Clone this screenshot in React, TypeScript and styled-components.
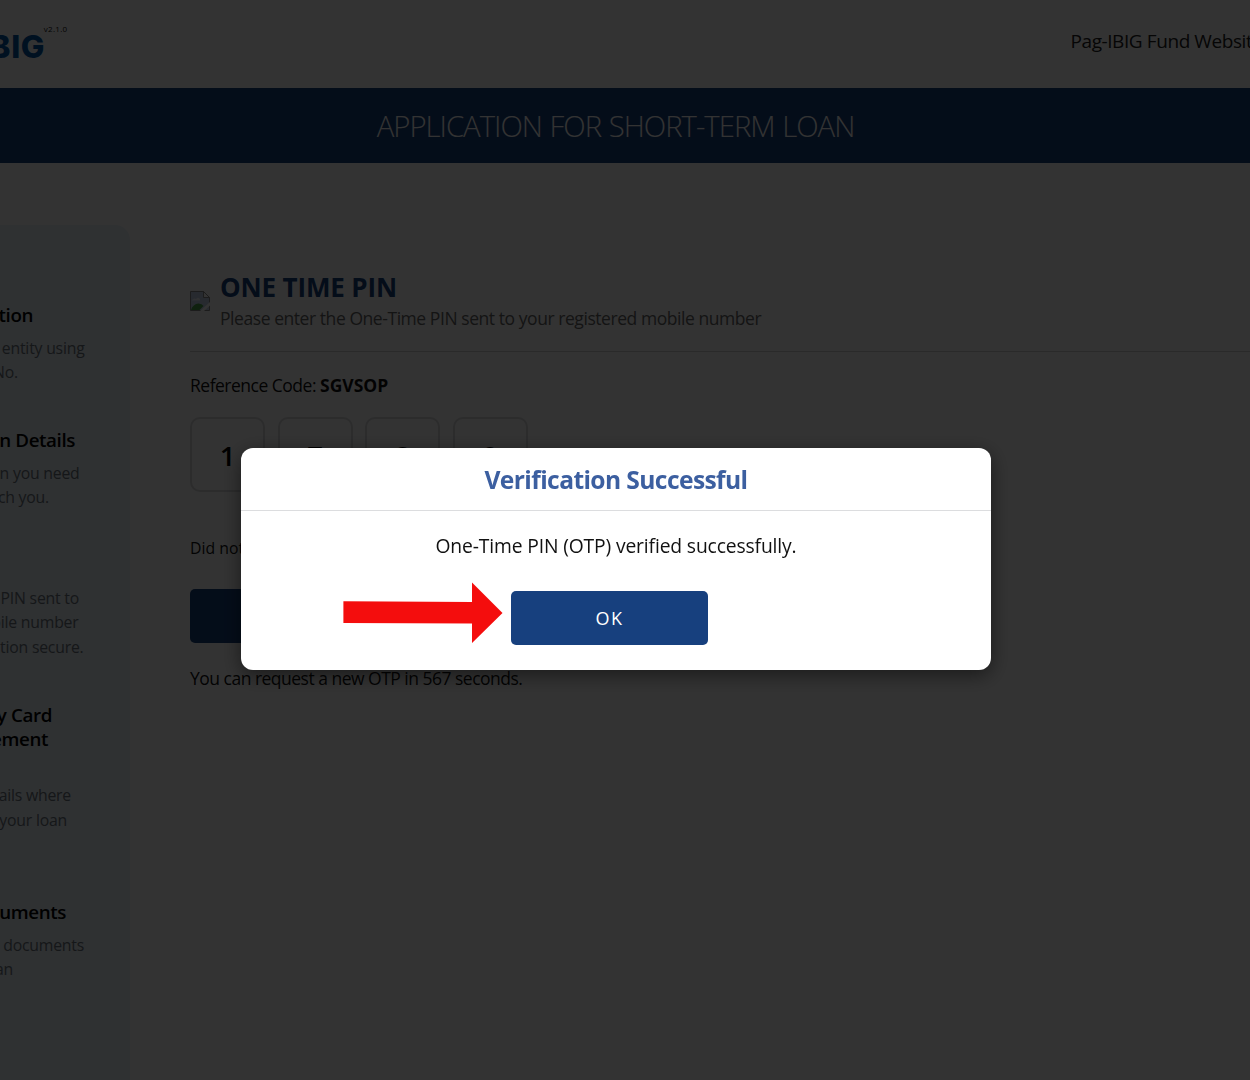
import React from "react";
import styled, { createGlobalStyle } from "styled-components";

const GlobalStyle = createGlobalStyle`
  * { box-sizing: border-box; }
  html, body { margin: 0; height: 1080px; overflow: hidden; background: #fff; }
  body { font-family: "Open Sans", "Noto Sans", sans-serif; color: #111; white-space: nowrap; }
  h1, h2, h3, p { margin: 0; }
`;

const Page = styled.div`
  width: 1250px;
  height: 1080px;
  overflow: hidden;
  display: flex;
  flex-direction: column;
`;

const TopBar = styled.header`
  display: flex;
  justify-content: space-between;
  height: 88px;
  flex: none;
`;

const Brand = styled.div`
  display: flex;
  width: 67.5px;
  justify-content: flex-end;
  align-items: flex-start;
`;

const Logo = styled.div`
  font-family: Inter, sans-serif;
  font-weight: 800;
  font-size: 31.5px;
  line-height: 40px;
  letter-spacing: 0.7px;
  color: #0054a6;
  margin-top: 27px;
`;

const Version = styled.span`
  font-size: 8px;
  line-height: 12px;
  letter-spacing: 0.3px;
  margin-top: 23px;
  margin-left: -1.5px;
  width: 25.5px;
`;

const NavLink = styled.a`
  width: 180px;
  font-size: 19px;
  line-height: 83px;
  padding-left: 0.5px;
  letter-spacing: -0.42px;
  color: #222;
`;

const Banner = styled.div`
  flex: none;
  height: 75px;
  padding-right: 19px;
  background: #17407e;
  text-align: center;
`;

const BannerTitle = styled.h1`
  font-size: 29.3px;
  font-weight: 300;
  line-height: 77px;
  letter-spacing: -1px;
  word-spacing: 1px;
  color: #fff;
`;

const Columns = styled.div`
  display: flex;
  flex: 1;
  gap: 60px;
  min-height: 0;
`;

const Sidebar = styled.aside`
  flex: none;
  width: 130px;
  margin-top: 62px;
  padding-top: 77.9px;
  background: #eaf2fa;
  border-top-right-radius: 15px;
  display: flex;
  flex-direction: column;
  gap: 43.3px;
`;

const Step = styled.section`
  display: flex;
  flex-direction: column;
`;

const StepTitle = styled.h3<{ $end: number }>`
  width: ${(p) => p.$end}px;
  min-height: 24px;
  display: flex;
  justify-content: flex-end;
  font-size: 18.8px;
  font-weight: 600;
  line-height: 24px;
  letter-spacing: -0.4px;
  color: #000;
`;

const StepBody = styled.div`
  margin-top: 8.75px;
`;

const StepLine = styled.p<{ $end: number }>`
  width: ${(p) => p.$end}px;
  height: 24.5px;
  display: flex;
  justify-content: flex-end;
  font-size: 15.8px;
  line-height: 24.5px;
  letter-spacing: -0.22px;
  color: #6c757d;
`;

const Main = styled.main`
  flex: 1;
  padding-top: 108px;
`;

const Heading = styled.div`
  display: flex;
  gap: 10px;
  height: 81px;
  border-bottom: 1px solid #cfd0d2;
  margin-bottom: 20px;
`;

const BrokenImage = styled.svg`
  margin-top: 20px;
  flex: none;
`;

const HeadingText = styled.div`
  display: flex;
  flex-direction: column;
  gap: 2px;
`;

const PinTitle = styled.h2`
  font-size: 26px;
  line-height: 32px;
  font-weight: 700;
  letter-spacing: -0.15px;
  color: #17407e;
`;

const Subtitle = styled.p`
  font-size: 17.5px;
  line-height: 27px;
  letter-spacing: -0.44px;
  color: #666;
`;

const Reference = styled.p`
  font-size: 17.5px;
  line-height: 27px;
  letter-spacing: -0.5px;
  b { font-weight: 700; letter-spacing: 0; }
`;

const PinRow = styled.div`
  display: flex;
  gap: 12.6px;
  margin-top: 18px;
`;

const PinBox = styled.div`
  width: 75px;
  height: 75px;
  border: 2px solid #dadbdd;
  border-radius: 10px;
  text-align: center;
  font-size: 27.5px;
  font-weight: 600;
  line-height: 73px;
  color: #000;
`;

const Resend = styled.p`
  margin-top: 44px;
  font-size: 15.8px;
  line-height: 24px;
`;

const Button = styled.button`
  display: block;
  width: 197px;
  height: 54px;
  padding: 0;
  border: 0;
  border-radius: 5px;
  background: #17407e;
  color: #fff;
  font-family: inherit;
  font-size: 18px;
  letter-spacing: 1.6px;
`;

const VerifyButton = styled(Button)`
  margin-top: 29px;
`;

const Countdown = styled.p`
  margin-top: 22px;
  font-size: 17.5px;
  line-height: 27px;
  letter-spacing: -0.51px;
`;

const Overlay = styled.div`
  position: fixed;
  inset: 0;
  background: rgba(0, 0, 0, 0.8);
  display: flex;
  justify-content: center;
  align-items: flex-start;
  padding: 448px 18px 0 0;
`;

const Dialog = styled.div`
  width: 750px;
  height: 222px;
  border-radius: 12px;
  background: #fff;
  box-shadow: 0 5px 20px rgba(0, 0, 0, 0.5);
`;

const DialogTitle = styled.h2`
  height: 63px;
  border-bottom: 1px solid #dcdddf;
  text-align: center;
  font-size: 24.6px;
  line-height: 64px;
  font-weight: 700;
  letter-spacing: -0.6px;
  color: #3c5fa0;
`;

const Message = styled.p`
  margin-top: 21px;
  text-align: center;
  font-size: 19.3px;
  letter-spacing: -0.14px;
  line-height: 28px;
  color: #111;
`;

const Actions = styled.div`
  display: flex;
  gap: 7px;
  align-items: flex-start;
  padding: 22px 0 0 102px;
`;

const OkButton = styled(Button)`
  margin-top: 9px;
`;

const steps = [
  { titles: [{ t: "tion", end: 33 }], lines: [{ t: "entity using", end: 84.5 }, { t: "No.", end: 18 }] },
  { titles: [{ t: "n Details", end: 75 }], lines: [{ t: "n you need", end: 79.5 }, { t: "ch you.", end: 49 }] },
  { titles: [{ t: "", end: 0 }], lines: [{ t: "PIN sent to", end: 79 }, { t: "bile number", end: 78.5 }, { t: "tion secure.", end: 83.5 }] },
  {
    titles: [{ t: "y Card", end: 52 }, { t: "ement", end: 48 }, { t: "", end: 0 }],
    lines: [{ t: "ails where", end: 71 }, { t: "your loan", end: 67 }, { t: "", end: 0 }],
  },
  { titles: [{ t: "uments", end: 66 }], lines: [{ t: "documents", end: 84 }, { t: "an", end: 13 }] },
];

export default function App() {
  return (
    <>
      <GlobalStyle />
      <Page>
        <TopBar>
          <Brand>
            <Logo>BIG</Logo>
            <Version>v2.1.0</Version>
          </Brand>
          <NavLink>Pag-IBIG Fund Website</NavLink>
        </TopBar>
        <Banner>
          <BannerTitle>APPLICATION FOR SHORT-TERM LOAN</BannerTitle>
        </Banner>
        <Columns>
          <Sidebar>
            {steps.map((s, i) => (
              <Step key={i}>
                {s.titles.map((x, j) => (
                  <StepTitle key={j} $end={x.end}>{x.t}</StepTitle>
                ))}
                <StepBody>
                  {s.lines.map((x, j) => (
                    <StepLine key={j} $end={x.end}>{x.t}</StepLine>
                  ))}
                </StepBody>
              </Step>
            ))}
          </Sidebar>
          <Main>
            <Heading>
              <BrokenImage width="20" height="20" viewBox="0 0 20 20">
                <path d="M.5 .5H13.5L19.5 6.5V19.5H.5Z" fill="#c3d1ea" stroke="#8a8a8a" />
                <path d="M2 9Q4 6.5 6 8Q8 5.5 10 8V9.5H2Z" fill="#eef2fa" />
                <path d="M1 19Q3 13 8.5 12.5Q12 12.5 13.5 15L9.5 19Z" fill="#4da54b" />
                <path d="M10 20L20 11V14.5L14 20Z" fill="#fff" />
                <path d="M13.5 .5V6.5H19.5Z" fill="#fff" stroke="#8a8a8a" />
              </BrokenImage>
              <HeadingText>
                <PinTitle>ONE TIME PIN</PinTitle>
                <Subtitle>Please enter the One-Time PIN sent to your registered mobile number</Subtitle>
              </HeadingText>
            </Heading>
            <Reference>
              Reference Code: <b>SGVSOP</b>
            </Reference>
            <PinRow>
              {["1", "7", "8", "9"].map((d) => (
                <PinBox key={d}>{d}</PinBox>
              ))}
            </PinRow>
            <Resend>Did not</Resend>
            <VerifyButton />
            <Countdown>You can request a new OTP in 567 seconds.</Countdown>
          </Main>
        </Columns>
      </Page>
      <Overlay>
        <Dialog role="dialog">
          <DialogTitle>Verification Successful</DialogTitle>
          <Message>One-Time PIN (OTP) verified successfully.</Message>
          <Actions>
            <svg width="161" height="62" viewBox="0 0 161 62">
              <path d="M.4 19.3L129 20V.5L159.5 31L129 61V41.5L.4 41Z" fill="#f40d0d" />
            </svg>
            <OkButton>OK</OkButton>
          </Actions>
        </Dialog>
      </Overlay>
    </>
  );
}
